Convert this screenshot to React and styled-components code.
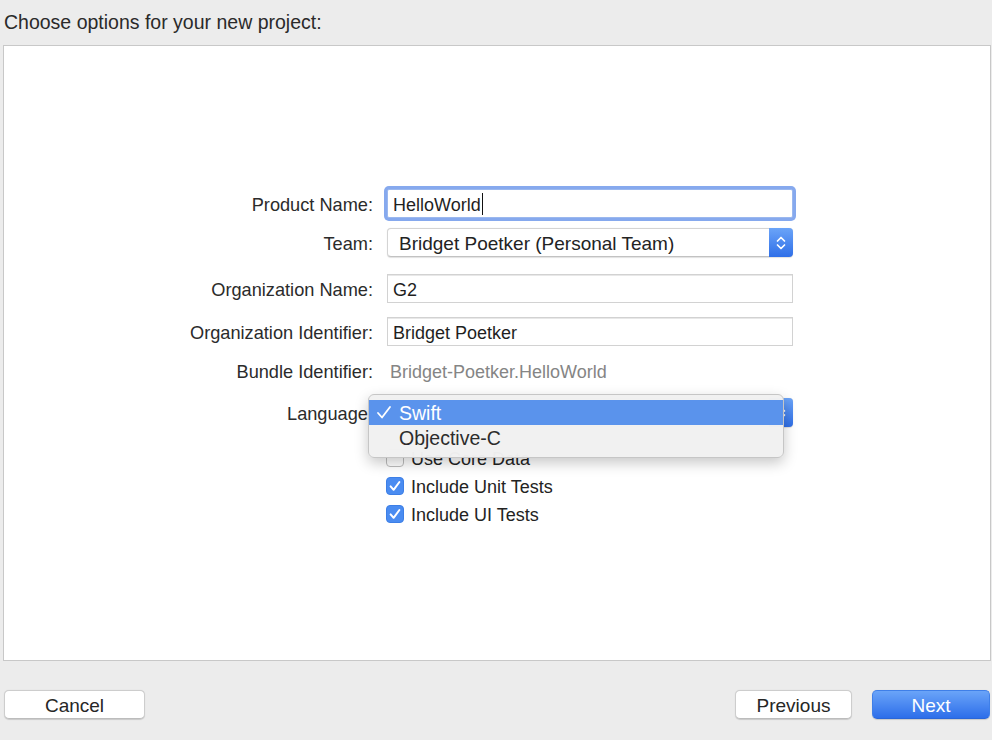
import React from 'react';
import styled, { createGlobalStyle } from 'styled-components';

const GlobalStyle = createGlobalStyle`
    html, body {
        margin: 0;
        padding: 0;
        background: #ececec;
    }
    body {
        font-family: "Liberation Sans", Arial, sans-serif;
        color: #262626;
        -webkit-font-smoothing: antialiased;
    }
`;

const Window = styled.div`
    width: 992px;
    height: 740px;
    display: flex;
    flex-direction: column;
    background: #ececec;
    overflow: hidden;
`;

const Header = styled.div`
    height: 45px;
    box-sizing: border-box;
    padding: 10px 0 0 4px;
    font-size: 19.5px;
    line-height: 24px;
    color: #2a2a2a;
`;

const Panel = styled.div`
    margin: 0 1px 0 3px;
    height: 616px;
    box-sizing: border-box;
    background: #fff;
    border: 1px solid #c8c8c8;
    padding-top: 143px;
    display: flex;
    flex-direction: column;
`;

const Row = styled.div`
    display: grid;
    grid-template-columns: 369px 406px;
    column-gap: 14px;
    align-items: center;
    height: ${p => p.$h || 29}px;
    margin-top: ${p => p.$gap || 0}px;
`;

const Label = styled.div`
    text-align: right;
    font-size: 18.2px;
    color: #2b2b2b;
    white-space: nowrap;
    padding-top: 3px;
`;

const TextField = styled.div`
    height: 29px;
    box-sizing: border-box;
    border: 1px solid ${p => (p.$focused ? '#9bb8ee' : '#d2d2d2')};
    box-shadow: ${p => (p.$focused ? '0 0 0 3px #86a9ee' : 'inset 0 1px 0 #e8e8e8')};
    border-radius: ${p => (p.$focused ? '2px' : '0')};
    background: #fff;
    display: flex;
    align-items: center;
    padding: 3px 0 0 5px;
    font-size: 18px;
    color: #1f1f1f;
`;

const Caret = styled.span`
    display: inline-block;
    width: 1.5px;
    height: 22px;
    background: #111;
    margin: -3px 0 0 1px;
`;

const StaticValue = styled.div`
    padding: 3px 0 0 3px;
    font-size: 18px;
    color: #858585;
`;

const PopupButton = styled.div`
    position: relative;
    height: 29px;
    box-sizing: border-box;
    border: 1px solid #d4d4d4;
    border-bottom-color: #c2c2c2;
    border-radius: 4px;
    background: #fff;
    display: flex;
    align-items: center;
    font-size: 19px;
    color: #232323;
    box-shadow: 0 0.5px 1px rgba(0, 0, 0, 0.12);
`;

const PopupText = styled.div`
    flex: 1;
    padding: 2px 0 0 11px;
`;

const Stepper = styled.div`
    width: 24px;
    height: 29px;
    margin: -1px -1px -1px 0;
    border-radius: 0 4px 4px 0;
    background: linear-gradient(#6ba4f8, #2f6fe8);
    display: flex;
    align-items: center;
    justify-content: center;
`;

const Menu = styled.div`
    position: absolute;
    left: -20px;
    top: -5px;
    width: 416px;
    height: 64px;
    box-sizing: border-box;
    background: rgba(241, 241, 241, 0.98);
    border: 1px solid #c6c6c6;
    border-radius: 6px;
    box-shadow: 0 5px 14px rgba(0, 0, 0, 0.22);
    padding-top: 5px;
    z-index: 5;
`;

const MenuItem = styled.div`
    height: 25px;
    display: flex;
    align-items: center;
    font-size: 19.5px;
    color: ${p => (p.$selected ? '#fff' : '#2c2c2c')};
    background: ${p => (p.$selected ? '#5a93ec' : 'transparent')};
    padding: 2px 0 0 30px;
    box-sizing: border-box;
    position: relative;
`;

const Check = styled.svg`
    position: absolute;
    left: 7px;
    top: 5px;
`;

const CheckRow = styled.div`
    display: flex;
    align-items: center;
    height: 28px;
    margin-left: 382px;
    margin-top: ${p => p.$gap || 0}px;
    font-size: 18px;
    color: #232323;
    gap: 7px;
`;

const CheckText = styled.span`
    padding-top: 3px;
`;

const Box = styled.div`
    width: 18px;
    height: 18px;
    box-sizing: border-box;
    border-radius: 4px;
    background: ${p => (p.$checked ? '#4a8cf1' : '#fff')};
    border: 1px solid ${p => (p.$checked ? '#3d7fe6' : '#bdbdbd')};
    display: flex;
    align-items: center;
    justify-content: center;
`;

const Footer = styled.div`
    display: flex;
    align-items: center;
    margin-top: 29px;
    padding: 0 2px 0 4px;
`;

const Spacer = styled.div`
    flex: 1;
`;

const Button = styled.button`
    height: 29px;
    width: ${p => p.$w}px;
    margin-left: ${p => p.$ml || 0}px;
    box-sizing: border-box;
    border-radius: 5px;
    font-family: "Liberation Sans", Arial, sans-serif;
    font-size: 19px;
    padding: 2px 0 0;
    border: 1px solid ${p => (p.$primary ? '#3f7fe8' : '#cdcdcd')};
    border-bottom-color: ${p => (p.$primary ? '#2a66d8' : '#bcbcbc')};
    background: ${p => (p.$primary ? 'linear-gradient(#6aa4f8, #2d6eea)' : '#fff')};
    color: ${p => (p.$primary ? '#fff' : '#262626')};
    box-shadow: 0 0.5px 1px rgba(0, 0, 0, 0.15);
`;

const Chevrons = () => (
    <svg width="12" height="18" viewBox="0 0 12 18">
        <path d="M2.5 7 L6 3.5 L9.5 7" fill="none" stroke="#fff" strokeWidth="1.7" strokeLinecap="round" strokeLinejoin="round" />
        <path d="M2.5 11 L6 14.5 L9.5 11" fill="none" stroke="#fff" strokeWidth="1.7" strokeLinecap="round" strokeLinejoin="round" />
    </svg>
);

const Tick = () => (
    <svg width="14" height="14" viewBox="0 0 14 14">
        <path d="M2.6 7.4 L5.6 10.8 L11.4 3" fill="none" stroke="#fff" strokeWidth="2" strokeLinecap="round" strokeLinejoin="round" />
    </svg>
);

const App = () => {
    return (
        <Window>
            <GlobalStyle />
            <Header>Choose options for your new project:</Header>
            <Panel>
                <Row>
                    <Label>Product Name:</Label>
                    <TextField $focused>
                        HelloWorld<Caret />
                    </TextField>
                </Row>
                <Row $gap={10}>
                    <Label>Team:</Label>
                    <PopupButton>
                        <PopupText>Bridget Poetker (Personal Team)</PopupText>
                        <Stepper><Chevrons /></Stepper>
                    </PopupButton>
                </Row>
                <Row $gap={17}>
                    <Label>Organization Name:</Label>
                    <TextField>G2</TextField>
                </Row>
                <Row $gap={14}>
                    <Label>Organization Identifier:</Label>
                    <TextField>Bridget Poetker</TextField>
                </Row>
                <Row $gap={13} $h={24}>
                    <Label>Bundle Identifier:</Label>
                    <StaticValue>Bridget-Poetker.HelloWorld</StaticValue>
                </Row>
                <Row $gap={15} $h={28}>
                    <Label>Language:</Label>
                    <PopupButton>
                        <PopupText>Swift</PopupText>
                        <Stepper><Chevrons /></Stepper>
                        <Menu>
                            <MenuItem $selected>
                                <Check width="16" height="15" viewBox="0 0 16 15">
                                    <path d="M2 8 L6 12.5 L14 2" fill="none" stroke="#fff" strokeWidth="1.8" strokeLinecap="round" strokeLinejoin="round" />
                                </Check>
                                Swift
                            </MenuItem>
                            <MenuItem>Objective-C</MenuItem>
                        </Menu>
                    </PopupButton>
                </Row>
                <CheckRow $gap={18}>
                    <Box />
                    <CheckText>Use Core Data</CheckText>
                </CheckRow>
                <CheckRow>
                    <Box $checked><Tick /></Box>
                    <CheckText>Include Unit Tests</CheckText>
                </CheckRow>
                <CheckRow>
                    <Box $checked><Tick /></Box>
                    <CheckText>Include UI Tests</CheckText>
                </CheckRow>
            </Panel>
            <Footer>
                <Button $w={141}>Cancel</Button>
                <Spacer />
                <Button $w={117}>Previous</Button>
                <Button $w={118} $ml={20} $primary>Next</Button>
            </Footer>
        </Window>
    );
};

export default App;
